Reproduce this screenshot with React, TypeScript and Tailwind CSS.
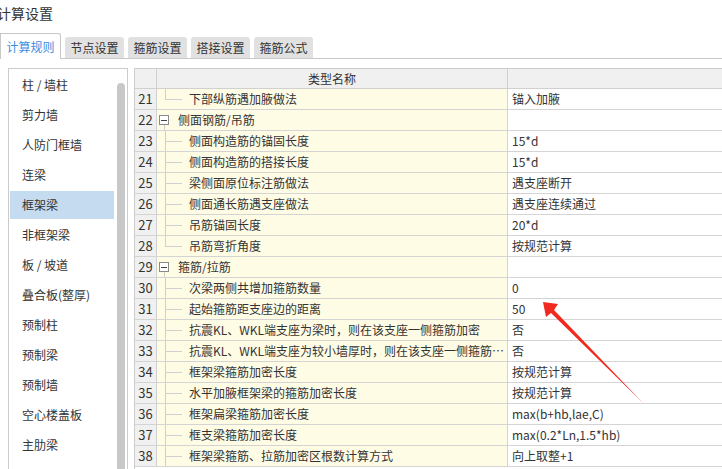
import React from "react";

type Row = {
  no: number;
  name: string;
  value?: string;
  kind: "child" | "last" | "group";
};

const rows: Row[] = [
  { no: 21, name: "下部纵筋遇加腋做法", value: "锚入加腋", kind: "last" },
  { no: 22, name: "侧面钢筋/吊筋", kind: "group" },
  { no: 23, name: "侧面构造筋的锚固长度", value: "15*d", kind: "child" },
  { no: 24, name: "侧面构造筋的搭接长度", value: "15*d", kind: "child" },
  { no: 25, name: "梁侧面原位标注筋做法", value: "遇支座断开", kind: "child" },
  { no: 26, name: "侧面通长筋遇支座做法", value: "遇支座连续通过", kind: "child" },
  { no: 27, name: "吊筋锚固长度", value: "20*d", kind: "child" },
  { no: 28, name: "吊筋弯折角度", value: "按规范计算", kind: "last" },
  { no: 29, name: "箍筋/拉筋", kind: "group" },
  { no: 30, name: "次梁两侧共增加箍筋数量", value: "0", kind: "child" },
  { no: 31, name: "起始箍筋距支座边的距离", value: "50", kind: "child" },
  { no: 32, name: "抗震KL、WKL端支座为梁时，则在该支座一侧箍筋加密", value: "否", kind: "child" },
  { no: 33, name: "抗震KL、WKL端支座为较小墙厚时，则在该支座一侧箍筋加密", value: "否", kind: "child" },
  { no: 34, name: "框架梁箍筋加密长度", value: "按规范计算", kind: "child" },
  { no: 35, name: "水平加腋框架梁的箍筋加密长度", value: "按规范计算", kind: "child" },
  { no: 36, name: "框架扁梁箍筋加密长度", value: "max(b+hb,lae,C)", kind: "child" },
  { no: 37, name: "框支梁箍筋加密长度", value: "max(0.2*Ln,1.5*hb)", kind: "child" },
  { no: 38, name: "框架梁箍筋、拉筋加密区根数计算方式", value: "向上取整+1", kind: "child" },
];

const items = [
  "柱 / 墙柱",
  "剪力墙",
  "人防门框墙",
  "连梁",
  "框架梁",
  "非框架梁",
  "板 / 坡道",
  "叠合板(整厚)",
  "预制柱",
  "预制梁",
  "预制墙",
  "空心楼盖板",
  "主肋梁",
];

const tabs = ["计算规则", "节点设置", "箍筋设置", "搭接设置", "箍筋公式"];

function TreeMark({ kind }: { kind: Row["kind"] }) {
  if (kind === "group") {
    return (
      <div className="w-[21px] h-full flex items-center shrink-0 relative">
        <div className="ml-[2px] w-[10px] h-[10px] border border-[#8a8a8a] bg-white flex items-center justify-center">
          <div className="w-[6px] h-px bg-[#444]" />
        </div>
        <div className="absolute left-[7px] top-[15px] bottom-0 w-px bg-[#cfcfcf]" />
      </div>
    );
  }
  return (
    <div className="w-[32px] h-full shrink-0 relative">
      <div
        className={
          kind === "last"
            ? "absolute left-[8px] top-0 h-[10px] w-px bg-[#cfcfcf]"
            : "absolute left-[8px] top-0 bottom-0 w-px bg-[#cfcfcf]"
        }
      />
      <div className="absolute left-[8px] top-[10px] w-[17px] h-px bg-[#cfcfcf]" />
    </div>
  );
}

export default function App() {
  return (
    <div
      className="w-[722px] h-[469px] overflow-hidden bg-white relative text-[#333]"
      style={{ fontFamily: '"Noto Sans CJK SC", "Noto Sans", sans-serif' }}
    >
      {/* 标题 */}
      <div className="h-[33px] pt-[3px] ml-[-3px] text-[14px] leading-[20px] text-[#333]">计算设置</div>

      {/* 标签页 */}
      <div className="flex items-end gap-[4px] h-[26px] border-b border-[#c8c8c8]">
        {tabs.map((t, i) =>
          i === 0 ? (
            <div
              key={t}
              className="w-[61px] h-[26px] bg-white border border-b-0 border-[#c8c8c8] rounded-tr-[3px] mb-[-1px] flex items-center justify-center text-[12px] text-[#3c8ee0]"
            >
              {t}
            </div>
          ) : (
            <div
              key={t}
              className="w-[59px] h-[21px] bg-[#e1e1e1] rounded-t-[3px] flex items-center justify-center text-[12px] text-[#333]"
            >
              {t}
            </div>
          )
        )}
      </div>

      {/* 内容区 */}
      <div className="flex pt-[9px] pl-[8px] gap-[6px]">
        {/* 左侧列表 */}
        <div className="w-[120px] h-[420px] border border-[#cccccc] flex shrink-0">
          <div className="flex-1 flex flex-col gap-[2px] pt-[2px] pl-px">
            {items.map((it) => (
              <div
                key={it}
                className={
                  it === "框架梁"
                    ? "h-[28px] pl-[12px] flex items-center text-[12px] bg-[#c5dbf0]"
                    : "h-[28px] pl-[12px] flex items-center text-[12px]"
                }
              >
                {it}
              </div>
            ))}
          </div>
          <div className="w-[13px] pt-[14px] flex justify-center">
            <div className="w-[8px] h-full bg-[#c8c8c8] rounded-t-[4px]" />
          </div>
        </div>

        {/* 表格 */}
        <div className="flex-1 h-[420px] border-l border-t border-[#cccccc] text-[12px]">
          <div className="flex h-[20px] bg-[#f0f0f0] border-b border-[#d0d0d0]">
            <div className="w-[22px] border-r border-[#d0d0d0] shrink-0" />
            <div className="w-[351px] border-r border-[#d0d0d0] shrink-0 flex items-center justify-center">
              类型名称
            </div>
            <div className="flex-1" />
          </div>
          {rows.map((r) => (
            <div key={r.no} className="flex h-[21px] border-b border-[#d4d4d4]">
              <div className="w-[22px] shrink-0 bg-[#f0f0f0] border-r border-[#d0d0d0] flex items-center justify-center text-[13px] text-[#333]">
                {r.no}
              </div>
              <div className="w-[351px] shrink-0 bg-[#fffce6] border-r border-[#d4d4d4] flex items-center overflow-hidden">
                <TreeMark kind={r.kind} />
                <span className="truncate pr-[2px] leading-[20px]">{r.name}</span>
              </div>
              <div className="flex-1 bg-white flex items-center pl-[4px] leading-[20px]">{r.value}</div>
            </div>
          ))}
        </div>
      </div>

      {/* 红色箭头 */}
      <svg className="absolute left-0 top-0 pointer-events-none" width="722" height="469">
        <polygon points="543,302 558,304 554,310 643,403 551,313 546,317" fill="#f02a1e" />
      </svg>
    </div>
  );
}
